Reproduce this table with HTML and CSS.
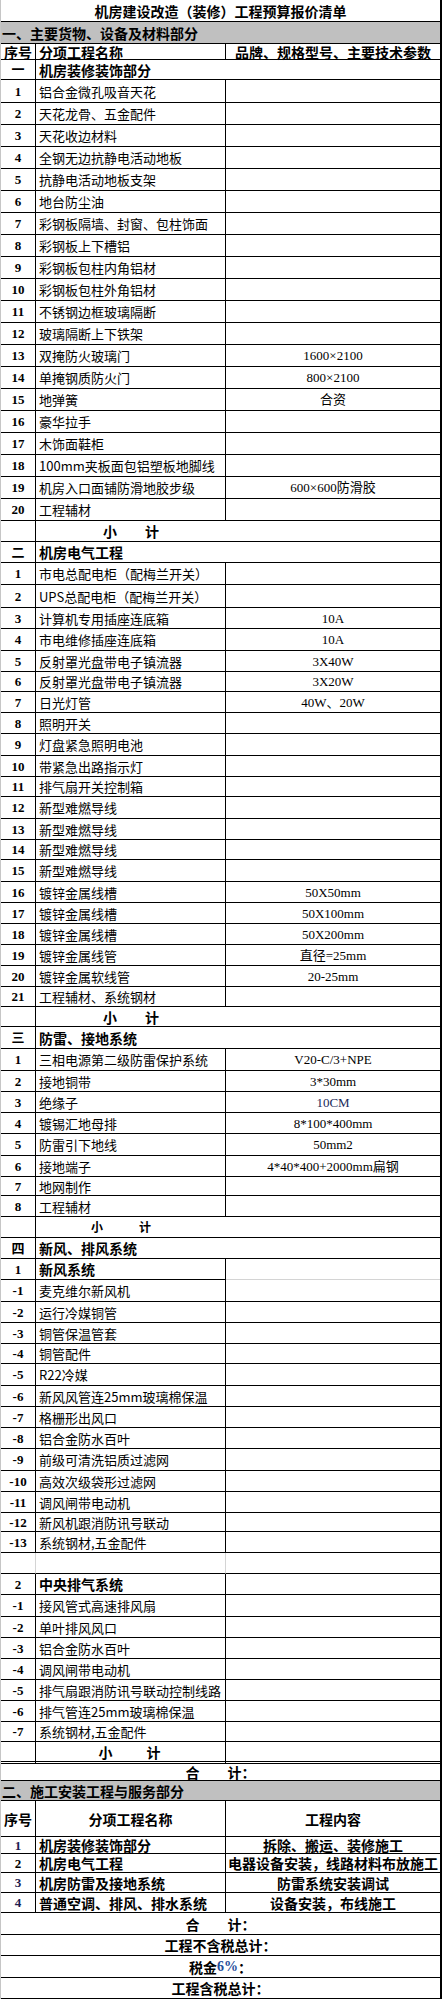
FILE: index.html
```html
<!DOCTYPE html>
<html lang="zh-CN">
<head>
<meta charset="utf-8">
<title>机房建设改造（装修）工程预算报价清单</title>
<link rel="stylesheet" href="styles.css">
</head>
<body>
<div class="sheet">
  <div class="r h22"><div class="c s3 b ctr">机房建设改造（装修）工程预算报价清单</div></div>
  <div class="r h22 gray"><div class="c s3 b sec">一、主要货物、设备及材料部分</div></div>
  <div class="r h16"><div class="c b ctr">序号</div><div class="c b t">分项工程名称</div><div class="c b ctr">品牌、规格型号、主要技术参数</div></div>
  <div class="r h20"><div class="c n">一</div><div class="c s2 b t">机房装修装饰部分</div></div>
  <div class="r h23"><div class="c n">1</div><div class="c t">铝合金微孔吸音天花</div><div class="c v"></div></div>
  <div class="r h22"><div class="c n">2</div><div class="c t">天花龙骨、五金配件</div><div class="c v"></div></div>
  <div class="r h22"><div class="c n">3</div><div class="c t">天花收边材料</div><div class="c v"></div></div>
  <div class="r h22"><div class="c n">4</div><div class="c t">全钢无边抗静电活动地板</div><div class="c v"></div></div>
  <div class="r h22"><div class="c n">5</div><div class="c t">抗静电活动地板支架</div><div class="c v"></div></div>
  <div class="r h22"><div class="c n">6</div><div class="c t">地台防尘油</div><div class="c v"></div></div>
  <div class="r h22"><div class="c n">7</div><div class="c t">彩钢板隔墙、封窗、包柱饰面</div><div class="c v"></div></div>
  <div class="r h22"><div class="c n">8</div><div class="c t">彩钢板上下槽铝</div><div class="c v"></div></div>
  <div class="r h22"><div class="c n">9</div><div class="c t">彩钢板包柱内角铝材</div><div class="c v"></div></div>
  <div class="r h22"><div class="c n">10</div><div class="c t">彩钢板包柱外角铝材</div><div class="c v"></div></div>
  <div class="r h22"><div class="c n">11</div><div class="c t">不锈钢边框玻璃隔断</div><div class="c v"></div></div>
  <div class="r h22"><div class="c n">12</div><div class="c t">玻璃隔断上下铁架</div><div class="c v"></div></div>
  <div class="r h22"><div class="c n">13</div><div class="c t">双掩防火玻璃门</div><div class="c v">1600×2100</div></div>
  <div class="r h22"><div class="c n">14</div><div class="c t">单掩钢质防火门</div><div class="c v">800×2100</div></div>
  <div class="r h22"><div class="c n">15</div><div class="c t">地弹簧</div><div class="c v">合资</div></div>
  <div class="r h22"><div class="c n">16</div><div class="c t">豪华拉手</div><div class="c v"></div></div>
  <div class="r h22"><div class="c n">17</div><div class="c t">木饰面鞋柜</div><div class="c v"></div></div>
  <div class="r h22"><div class="c n">18</div><div class="c t">100mm夹板面包铝塑板地脚线</div><div class="c v"></div></div>
  <div class="r h22"><div class="c n">19</div><div class="c t">机房入口面铺防滑地胶步级</div><div class="c v">600×600防滑胶</div></div>
  <div class="r h22"><div class="c n">20</div><div class="c t">工程辅材</div><div class="c v"></div></div>
  <div class="r h21"><div class="c n"></div><div class="c b sub nr">小　　计</div><div class="c v"></div></div>

  <div class="r h21"><div class="c n">二</div><div class="c s2 b t">机房电气工程</div></div>
  <div class="r h22"><div class="c n">1</div><div class="c t">市电总配电柜（配梅兰开关）</div><div class="c v"></div></div>
  <div class="r h23"><div class="c n">2</div><div class="c t">UPS总配电柜（配梅兰开关）</div><div class="c v"></div></div>
  <div class="r h21"><div class="c n">3</div><div class="c t">计算机专用插座连底箱</div><div class="c v">10A</div></div>
  <div class="r h22"><div class="c n">4</div><div class="c t">市电维修插座连底箱</div><div class="c v">10A</div></div>
  <div class="r h21"><div class="c n">5</div><div class="c t">反射罩光盘带电子镇流器</div><div class="c v">3X40W</div></div>
  <div class="r h20"><div class="c n">6</div><div class="c t">反射罩光盘带电子镇流器</div><div class="c v">3X20W</div></div>
  <div class="r h21"><div class="c n">7</div><div class="c t">日光灯管</div><div class="c v">40W、20W</div></div>
  <div class="r h21"><div class="c n">8</div><div class="c t">照明开关</div><div class="c v"></div></div>
  <div class="r h22"><div class="c n">9</div><div class="c t">灯盘紧急照明电池</div><div class="c v"></div></div>
  <div class="r h21"><div class="c n">10</div><div class="c t">带紧急出路指示灯</div><div class="c v"></div></div>
  <div class="r h20"><div class="c n">11</div><div class="c t">排气扇开关控制箱</div><div class="c v"></div></div>
  <div class="r h22"><div class="c n">12</div><div class="c t">新型难燃导线</div><div class="c v"></div></div>
  <div class="r h21"><div class="c n">13</div><div class="c t">新型难燃导线</div><div class="c v"></div></div>
  <div class="r h20"><div class="c n">14</div><div class="c t">新型难燃导线</div><div class="c v"></div></div>
  <div class="r h22"><div class="c n">15</div><div class="c t">新型难燃导线</div><div class="c v"></div></div>
  <div class="r h21"><div class="c n">16</div><div class="c t">镀锌金属线槽</div><div class="c v">50X50mm</div></div>
  <div class="r h21"><div class="c n">17</div><div class="c t">镀锌金属线槽</div><div class="c v">50X100mm</div></div>
  <div class="r h21"><div class="c n">18</div><div class="c t">镀锌金属线槽</div><div class="c v">50X200mm</div></div>
  <div class="r h21"><div class="c n">19</div><div class="c t">镀锌金属线管</div><div class="c v">直径=25mm</div></div>
  <div class="r h21"><div class="c n">20</div><div class="c t">镀锌金属软线管</div><div class="c v">20-25mm</div></div>
  <div class="r h20"><div class="c n">21</div><div class="c t">工程辅材、系统钢材</div><div class="c v"></div></div>
  <div class="r h20"><div class="c n"></div><div class="c b sub nr">小　　计</div><div class="c v"></div></div>

  <div class="r h22"><div class="c n">三</div><div class="c s2 b t">防雷、接地系统</div></div>
  <div class="r h22"><div class="c n">1</div><div class="c t">三相电源第二级防雷保护系统</div><div class="c v">V20-C/3+NPE</div></div>
  <div class="r h21"><div class="c n">2</div><div class="c t">接地铜带</div><div class="c v">3*30mm</div></div>
  <div class="r h21"><div class="c n">3</div><div class="c t">绝缘子</div><div class="c v tnr">10CM</div></div>
  <div class="r h21"><div class="c n">4</div><div class="c t">镀锡汇地母排</div><div class="c v">8*100*400mm</div></div>
  <div class="r h22"><div class="c n">5</div><div class="c t">防雷引下地线</div><div class="c v">50mm2</div></div>
  <div class="r h21"><div class="c n">6</div><div class="c t">接地端子</div><div class="c v">4*40*400+2000mm扁钢</div></div>
  <div class="r h19"><div class="c n">7</div><div class="c t">地网制作</div><div class="c v"></div></div>
  <div class="r h21"><div class="c n">8</div><div class="c t">工程辅材</div><div class="c v"></div></div>
  <div class="r h21"><div class="c n"></div><div class="c b sub sm nr">小　　计</div><div class="c v"></div></div>

  <div class="r h21"><div class="c n">四</div><div class="c s2 b t">新风、排风系统</div></div>
  <div class="r h21"><div class="c n">1</div><div class="c b t">新风系统</div><div class="c v gl"></div></div>
  <div class="r h22"><div class="c n">-1</div><div class="c t">麦克维尔新风机</div><div class="c v"></div></div>
  <div class="r h21"><div class="c n">-2</div><div class="c t">运行冷媒铜管</div><div class="c v"></div></div>
  <div class="r h21"><div class="c n">-3</div><div class="c t">铜管保温管套</div><div class="c v"></div></div>
  <div class="r h20"><div class="c n">-4</div><div class="c t">铜管配件</div><div class="c v"></div></div>
  <div class="r h22"><div class="c n">-5</div><div class="c t">R22冷媒</div><div class="c v"></div></div>
  <div class="r h21"><div class="c n">-6</div><div class="c t">新风风管连25mm玻璃棉保温</div><div class="c v"></div></div>
  <div class="r h21"><div class="c n">-7</div><div class="c t">格栅形出风口</div><div class="c v"></div></div>
  <div class="r h21"><div class="c n">-8</div><div class="c t">铝合金防水百叶</div><div class="c v"></div></div>
  <div class="r h22"><div class="c n">-9</div><div class="c t">前级可清洗铝质过滤网</div><div class="c v"></div></div>
  <div class="r h21"><div class="c n">-10</div><div class="c t">高效次级袋形过滤网</div><div class="c v"></div></div>
  <div class="r h21"><div class="c n">-11</div><div class="c t">调风闸带电动机</div><div class="c v"></div></div>
  <div class="r h19"><div class="c n">-12</div><div class="c t">新风机跟消防讯号联动</div><div class="c v"></div></div>
  <div class="r h21"><div class="c n">-13</div><div class="c t">系统钢材,五金配件</div><div class="c v"></div></div>
  <div class="r h21"><div class="c n gl"></div><div class="c t gl"></div><div class="c v"></div></div>
  <div class="r h21"><div class="c n">2</div><div class="c b t">中央排气系统</div><div class="c v"></div></div>
  <div class="r h22"><div class="c n">-1</div><div class="c t">接风管式高速排风扇</div><div class="c v"></div></div>
  <div class="r h21"><div class="c n">-2</div><div class="c t">单叶排风风口</div><div class="c v"></div></div>
  <div class="r h21"><div class="c n">-3</div><div class="c t">铝合金防水百叶</div><div class="c v"></div></div>
  <div class="r h21"><div class="c n">-4</div><div class="c t">调风闸带电动机</div><div class="c v"></div></div>
  <div class="r h21"><div class="c n">-5</div><div class="c t">排气扇跟消防讯号联动控制线路</div><div class="c v"></div></div>
  <div class="r h21"><div class="c n">-6</div><div class="c t">排气管连25mm玻璃棉保温</div><div class="c v"></div></div>
  <div class="r h20"><div class="c n">-7</div><div class="c t">系统钢材,五金配件</div><div class="c v"></div></div>
  <div class="r h22 dbl"><div class="c n"></div><div class="c b sub lg">小　　计</div><div class="c v"></div></div>

  <div class="r h17"><div class="c s3 b ctr">合　　计：</div></div>
  <div class="r h20 gray"><div class="c s3 b sec">二、施工安装工程与服务部分</div></div>
  <div class="r h36"><div class="c b ctr">序号</div><div class="c b ctr">分项工程名称</div><div class="c b ctr">工程内容</div></div>
  <div class="r h17"><div class="c n navy">1</div><div class="c b t">机房装修装饰部分</div><div class="c b ctr">拆除、搬运、装修施工</div></div>
  <div class="r h19"><div class="c n">2</div><div class="c b t">机房电气工程</div><div class="c b ctr">电器设备安装，线路材料布放施工</div></div>
  <div class="r h20"><div class="c n navy">3</div><div class="c b t">机房防雷及接地系统</div><div class="c b ctr">防雷系统安装调试</div></div>
  <div class="r h20"><div class="c n navy">4</div><div class="c b t">普通空调、排风、排水系统</div><div class="c b ctr">设备安装，布线施工</div></div>
  <div class="r h22"><div class="c s3 b ctr">合　　计：</div></div>
  <div class="r h21"><div class="c s3 b ctr">工程不含税总计：</div></div>
  <div class="r h22"><div class="c s3 b ctr">税金<span class="pct">6%</span>：</div></div>
  <div class="r h21"><div class="c s3 b ctr">工程含税总计：</div></div>
</div>
</body>
</html>
```

FILE: styles.css
```css
html, body {
  margin: 0;
  padding: 0;
  background: #ffffff;
}

.sheet {
  width: 442px;
  box-sizing: border-box;
  border-left: 1px solid #c6c6c6;
  border-right: 2px solid #000000;
  font-family: "Noto Sans CJK SC", sans-serif;
  font-size: 13px;
  color: #000000;
}

.r {
  display: grid;
  grid-template-columns: 35px 190px 214px;
  box-sizing: border-box;
}

.h16 { height: 16px; }
.h17 { height: 17px; }
.h19 { height: 19px; }
.h20 { height: 20px; }
.h21 { height: 21px; }
.h22 { height: 22px; }
.h23 { height: 23px; }
.h36 { height: 36px; }

.c {
  box-sizing: border-box;
  border-right: 1px solid #000000;
  border-bottom: 1px solid #000000;
  display: flex;
  align-items: center;
  overflow: visible;
  white-space: nowrap;
  line-height: 1;
  min-width: 0;
}

.c:last-child { border-right: none; }

.s2 { grid-column: 2 / 4; }
.s3 { grid-column: 1 / 4; }

.nr { border-right: none; }

.b {
  font-weight: 700;
  font-size: 14px;
}

.ctr { justify-content: center; }

.t { padding-left: 3px; }

.sec { padding-left: 1px; }

.gray { background: #c0c0c0; }

.n {
  justify-content: center;
  font-family: "Liberation Serif", "Noto Sans CJK SC", serif;
  font-weight: 700;
  font-size: 13px;
}

.navy { color: #1c1c50; }

.v {
  justify-content: center;
  font-family: "Liberation Serif", "Noto Sans CJK SC", serif;
  font-size: 13px;
}

.tnr { color: #1a2a5a; }

.sub {
  justify-content: center;
  font-size: 14px;
}

.sub.sm {
  font-size: 12px;
  letter-spacing: 4px;
  padding-right: 16px;
}

.sub.lg { letter-spacing: 2px; }

.gl { border-color: #d4d4d4; }

.n.gl, .t.gl { border-right-color: #d4d4d4; border-bottom-color: #000000; }

.dbl .c { border-bottom: 3px double #000000; }

.pct {
  font-family: "Liberation Serif", serif;
  color: #1f4e9a;
}
```
